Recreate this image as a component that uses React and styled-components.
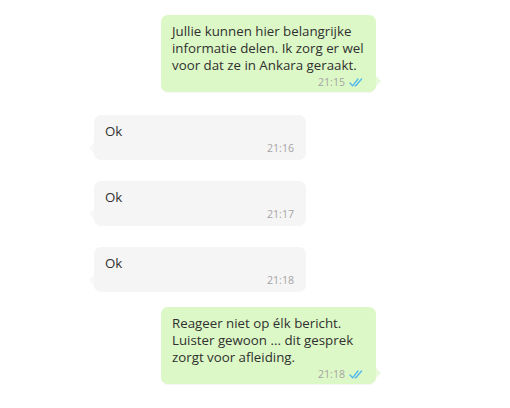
import React from 'react';
import styled, {createGlobalStyle} from 'styled-components';

const Global = createGlobalStyle`
	html, body {
		margin : 0;
		padding : 0;
		background : #ffffff;
	}
	body {
		font-family : "Open Sans", "Noto Sans", "Liberation Sans", sans-serif;
	}
`

const Chat = styled.div`
	width : 510px;
	height : 408px;
	overflow : hidden;
	display : flex;
	flex-direction : column;
	padding-top : 15px;
	box-sizing : border-box;
`

const Bubble = styled.div`
	position : relative;
	box-sizing : border-box;
	margin-top : ${(props)=>props.$gap}px;
	margin-left : ${(props)=>props.$out ? 161 : 94}px;
	width : ${(props)=>props.$out ? 215 : 212}px;
	padding : ${(props)=>props.$out ? "8px 13px 4px 11px" : "8px 12px 5px 11px"};
	border-radius : 7px;
	background-color : ${(props)=>props.$out ? "#dcf8c6":"#f5f5f5"};
	box-shadow : 0 1px 0.5px rgba(0,0,0,0.04);
	color : #303030;

	&::after {
		content : "";
		position : absolute;
		bottom : 6px;
		${(props)=>props.$out ? "right : -5px;" : "left : -5px;"}
		border-top : 5px solid transparent;
		border-bottom : 5px solid transparent;
		${(props)=>props.$out ? "border-left : 5px solid #e9f9dc;" : "border-right : 5px solid #f8f8f8;"}
	}
`

const Text = styled.div`
	font-size : 13.3px;
	line-height : 17px;
	white-space : pre;
`

const Meta = styled.div`
	display : flex;
	justify-content : flex-end;
	align-items : center;
	gap : 4px;
	margin-top : 2px;
	height : 12px;
	font-size : 10.6px;
	color : #a5a5a5;
`

const Ticks = () => (
	<svg width="14" height="9" viewBox="0 0 14 9" fill="none" stroke="#4fb6ec" strokeWidth="1.3" strokeLinecap="round">
		<path d="M1 5l2.6 2.8L9 1"/>
		<path d="M6.2 7.4l0.5 0.4L12.6 1"/>
	</svg>
)

const messages = [
	{out : true, gap : 0, text : "Jullie kunnen hier belangrijke\ninformatie delen. Ik zorg er wel\nvoor dat ze in Ankara geraakt.", time : "21:15"},
	{out : false, gap : 23, text : "Ok", time : "21:16"},
	{out : false, gap : 22, text : "Ok", time : "21:17"},
	{out : false, gap : 22, text : "Ok", time : "21:18"},
	{out : true, gap : 16, text : "Reageer niet op élk bericht.\nLuister gewoon ... dit gesprek\nzorgt voor afleiding.", time : "21:18"},
];

const App = () => {
	return (
		<>
			<Global/>
			<Chat>
				{messages.map((m, i) => (
					<Bubble key={i} $out={m.out} $gap={m.gap}>
						<Text>{m.text}</Text>
						<Meta>
							<span>{m.time}</span>
							{m.out && <Ticks/>}
						</Meta>
					</Bubble>
				))}
			</Chat>
		</>
	)
};

export default App;
